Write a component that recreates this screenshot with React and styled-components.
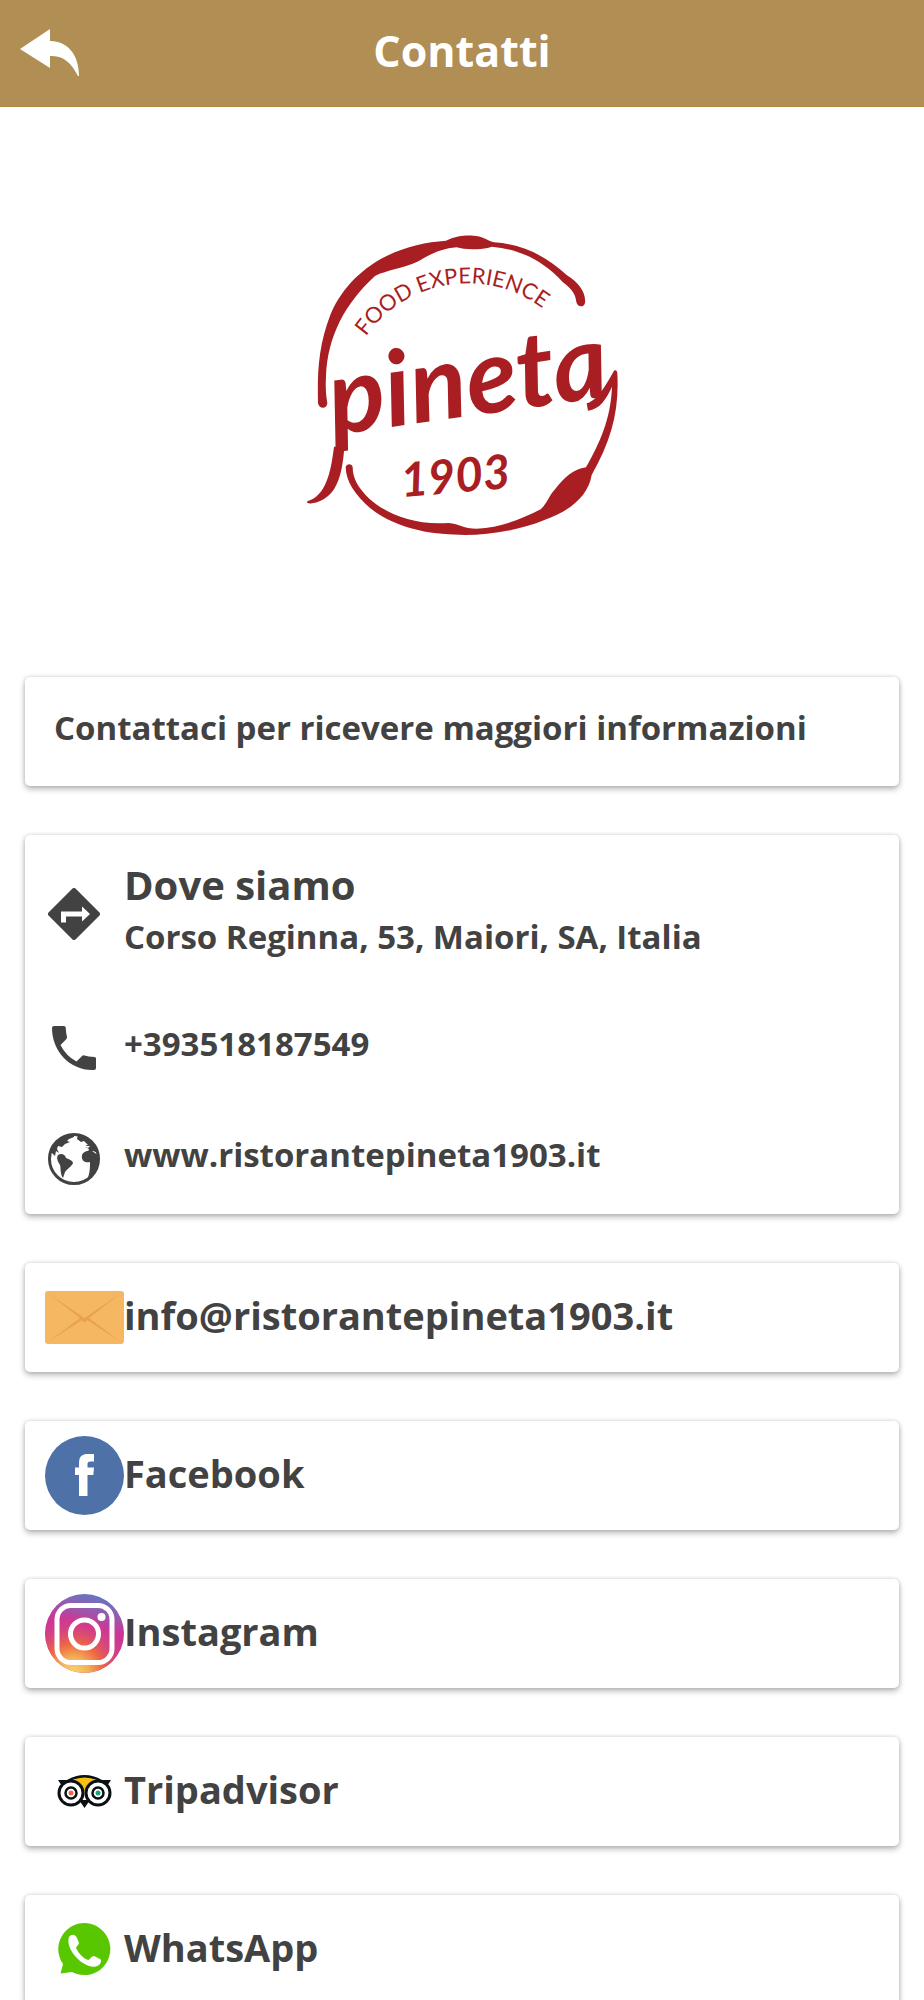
import React from 'react';
import styled, { createGlobalStyle } from 'styled-components';

const GlobalStyle = createGlobalStyle`
    * {
        box-sizing: border-box;
    }

    body {
        margin: 0;
        background: #FFFFFF;
        color: #424242;
        font-family: "Open Sans", "Noto Sans", sans-serif;
        font-weight: 700;
    }
`;

const Screen = styled.div`
    display: flex;
    flex-direction: column;
    height: 100vh;
`;

const Header = styled.header`
    display: grid;
    grid-template-columns: 100px 1fr 100px;
    align-items: center;
    flex-shrink: 0;
    height: 107px;
    background: #B08E54;
    border-bottom: 1px solid #B18A42;
`;

const BackButton = styled.button`
    display: flex;
    padding: 0 0 0 20px;
    border: 0;
    background: none;
    cursor: pointer;
`;

const Title = styled.h1`
    margin: 0;
    padding-bottom: 4px;
    color: white;
    font-size: 43px;
    line-height: 56px;
    text-align: center;
`;

const Content = styled.main`
    flex: 1;
    overflow-y: auto;
    scrollbar-width: none;
`;

const Hero = styled.div`
    display: flex;
    justify-content: center;
    padding: 113px 0 127px;
`;

const CardList = styled.div`
    display: flex;
    flex-direction: column;
    gap: 49px;
    padding: 0 25px 49px;
`;

const Card = styled.section`
    flex-shrink: 0;
    border-radius: 5px;
    background: white;
    box-shadow: 0 3px 6px rgba(0, 0, 0, 0.28), 0 0 4px rgba(0, 0, 0, 0.14);
`;

const Message = styled.p`
    margin: 0;
    padding: 31px 29px 38px;
    font-size: 33px;
    line-height: 40px;
`;

const InfoRow = styled.a`
    display: flex;
    align-items: center;
    gap: 24px;
    min-height: ${props => props.$tall ? '157px' : '111px'};
    padding: 0 23px;
    color: inherit;
    text-decoration: none;

    svg {
        flex-shrink: 0;
    }
`;

const InfoText = styled.div`
    display: flex;
    flex-direction: column;
    gap: 10px;
    padding-bottom: 8px;
`;

const InfoTitle = styled.h2`
    margin: 0;
    font-size: 40px;
    line-height: 44px;
`;

const InfoValue = styled.span`
    font-size: 33px;
    line-height: 40px;
`;

const SocialLink = styled.a`
    display: flex;
    align-items: center;
    height: 109px;
    padding: 0 20px;
    color: inherit;
    text-decoration: none;

    svg {
        flex-shrink: 0;
    }
`;

const SocialName = styled.span`
    padding-bottom: 6px;
    font-size: 38px;
    line-height: 44px;
`;

const LogoText = styled.text`
    font-family: Lato, sans-serif;
    font-style: ${props => props.$upright ? 'normal' : 'italic'};
    font-weight: ${props => props.$upright ? 400 : 700};
    font-size: ${props => props.$size}px;
    fill: #A91E22;
`;

function BackIcon() {
    return (
        <svg width="60" height="48" viewBox="0 0 60 48" fill="white" aria-hidden="true">
            <path d="M0 20 L30 0 V12 C48 12 59 26 59 47 H58 C50 32 43 27 30 27 V39 Z" />
        </svg>
    );
}

function PinetaLogo() {
    return (
        <svg width="344" height="330" viewBox="0 0 1032 990" fill="#A91E22" role="img" aria-label="Pineta 1903">
            <path d="M84 550 C82 460 84 380 122 282 C160 195 225 140 290 108 C350 78 410 66 468 62 C500 48 520 46 550 47 C575 47 590 60 612 67 C700 72 770 110 830 165 C870 190 888 220 885 248 C882 264 862 262 859 246 C857 220 842 204 818 186 C760 122 690 88 606 80 C575 90 525 90 500 82 C455 86 425 100 385 124 C340 146 290 150 255 168 C165 250 112 350 108 470 C106 505 108 525 112 550 C110 568 88 568 84 550 Z" />
            <path d="M167 742 C169 730 187 730 188 742 C188 775 205 805 238 836 C290 882 370 916 475 909 C510 912 520 926 560 926 C635 922 700 895 752 868 C772 850 775 830 795 808 C825 770 850 748 888 742 C928 670 962 600 966 500 C950 535 930 568 894 572 L890 550 C925 540 950 490 972 452 C977 448 982 453 982 460 C988 570 965 660 905 765 C895 830 835 875 765 899 C690 930 600 945 525 945 C440 943 330 935 240 864 C195 825 168 785 167 742 Z" />
            <path d="M163 680 C157 770 138 838 66 850 C56 852 48 849 52 844 C108 826 122 760 132 680 Z" />
            <path id="tagline" d="M161 562 A372 372 0 0 1 905 562" fill="none" />
            <LogoText $upright $size={66}>
                <textPath href="#tagline" startOffset="45%" textAnchor="middle">FOOD EXPERIENCE</textPath>
            </LogoText>
            <LogoText $size={314} transform="translate(130 645) rotate(-8)">pineta</LogoText>
            <LogoText $size={142} transform="translate(336 832) rotate(-5)">1903</LogoText>
        </svg>
    );
}

function DirectionsIcon() {
    return (
        <svg width="52" height="52" viewBox="0 0 52 52" fill="#424242" aria-hidden="true">
            <path d="M24.500 .5 Q26 -.6 27.500 .5 L51.500 24.500 Q52.500 26 51.500 27.500 L27.500 51.500 Q26 52.600 24.500 51.500 L.5 27.500 Q-.6 26 .5 24.500 Z" />
            <path d="M13 34.500 V23.500 H34 V18.500 L42 26 L34 33.500 V28.500 H18 V34.500 Z" fill="white" />
        </svg>
    );
}

function PhoneIcon() {
    return (
        <svg width="52" height="52" viewBox="0 0 52 52" fill="#424242" aria-hidden="true">
            <path d="M6 4 H16 Q17.500 4 17.700 5.500 Q18 11 19 15 Q19 16.500 18 17.500 L12.500 23 Q18 34 28.500 39.500 L34 34 Q35 33 36.500 33.500 Q40 34.500 46.500 35 Q48 35 48 36.500 V46 Q48 48 46 48 C22 49 4 29 4 6 Q4 4 6 4 Z" />
        </svg>
    );
}

function GlobeIcon() {
    return (
        <svg width="52" height="52" viewBox="0 0 52 52" fill="#424242" aria-hidden="true">
            <circle cx="26" cy="26" r="24.500" fill="white" stroke="#424242" strokeWidth="3" />
            <path d="M10 22 C13 20 17 21 18 25 C21 26 25 28 25 30 C24 33 19 36 17 39 L15 45 C12 41 13 35 12 32 C10 29 8 25 10 22 Z" />
            <path d="M34 22 C35 19 39 17 44 18 L50 22 C52 33 46 43 39 47 C42 41 42 34 42 29 C37 30 33 28 34 22 Z" />
            <path d="M2 18 C6 8 16 1 26 1 L26 4 L21 6 L19 8 L22 9 L17 11 L14 14 L10 13 L9 16 L11 20 L8 18 L7 23 Z" />
            <path d="M30 1 C40 3 47 10 50 20 L45 18 L40 19 L41 16 L37 14 L37 12 L40 12 L36 8 L33 9 L29 6 Z" />
            <path d="M36 11 L39 13 L42 13 L40 15 L37 14 Z" fill="white" />
        </svg>
    );
}

function MailIcon() {
    return (
        <svg width="79" height="79" viewBox="0 0 79 79" aria-hidden="true">
            <rect y="13" width="79" height="53" rx="3" fill="#F6B763" />
            <path d="M3 15 L35 37 L39.500 40 L44 37 L76 15 L44 40 L76 64 L42 42 L39.500 45 L37 42 L3 64 L35 40 Z" fill="#E9A24F" />
        </svg>
    );
}

function FacebookIcon() {
    return (
        <svg width="79" height="79" viewBox="0 0 79 79" aria-hidden="true">
            <circle cx="39.500" cy="39.500" r="39.500" fill="#4E71A8" />
            <path d="M34 60 V39 H30 V31.500 H34 V27 C34 20.500 37 18 43 18 H49 V25.500 H45.500 C43 25.500 42.500 26.500 42.500 28.500 V31.500 H49 L48.300 39 H42.500 V60 Z" fill="white" />
        </svg>
    );
}

function InstagramIcon() {
    return (
        <svg width="79" height="79" viewBox="0 0 79 79" aria-hidden="true">
            <defs>
                <linearGradient id="ig-base" x1=".65" y1="0" x2=".4" y2="1">
                    <stop offset="0" stopColor="#5F78C4" />
                    <stop offset=".16" stopColor="#8A62B4" />
                    <stop offset=".4" stopColor="#CB3697" />
                    <stop offset="1" stopColor="#CB3697" />
                </linearGradient>
                <radialGradient id="ig-warm" cx=".36" cy="1" r=".78">
                    <stop offset="0" stopColor="#F9D56C" />
                    <stop offset=".25" stopColor="#F3B058" />
                    <stop offset=".48" stopColor="#EE6544" />
                    <stop offset="1" stopColor="#CB3697" stopOpacity="0" />
                </radialGradient>
            </defs>
            <circle cx="39.500" cy="39.500" r="39.500" fill="url(#ig-base)" />
            <circle cx="39.500" cy="39.500" r="39.500" fill="url(#ig-warm)" />
            <rect x="12" y="11.500" width="55" height="57" rx="14" fill="none" stroke="white" strokeWidth="5" />
            <circle cx="39.500" cy="40" r="14" fill="none" stroke="white" strokeWidth="5" />
            <circle cx="56.500" cy="23" r="4" fill="white" />
        </svg>
    );
}

function TripadvisorIcon() {
    return (
        <svg width="79" height="79" viewBox="0 0 79 79" aria-hidden="true">
            <path d="M13 28 H22 Q39.500 18 57 28 H66 L62 34 H17 Z" fill="#0B1015" />
            <path d="M27 28 Q39.500 23 52 28 Q42 31 39.500 40 Q37 31 27 28 Z" fill="#F7C015" />
            <path d="M34 48 H45 L39.500 56 Z" fill="#0B1015" />
            {[{ x: 26, fill: '#EC6844' }, { x: 53, fill: '#18A67E' }].map(eye => (
                <g key={eye.x}>
                    <circle cx={eye.x} cy="41" r="12" fill="white" stroke="#0B1015" strokeWidth="3" />
                    <circle cx={eye.x} cy="41" r="5.500" fill="white" stroke="#0B1015" strokeWidth="2.500" />
                    <circle cx={eye.x} cy="41" r="2.500" fill={eye.fill} />
                </g>
            ))}
        </svg>
    );
}

function WhatsAppIcon() {
    return (
        <svg width="79" height="79" viewBox="0 0 79 79" aria-hidden="true">
            <path d="M15.500 63.500 L18 54 A26 26 0 1 1 27 62 Z" fill="#59C700" />
            <path d="M24 27 C27 23 31 25 32 28 L34 33 C34 35 31 36 31 38 C34 44 38 48 43 50 C45 50 46 46 49 46 L55 49 C57 50 56 53 54 55 C50 58 44 57 38 53 C30 48 21 36 24 27 Z" fill="white" />
        </svg>
    );
}

const socials = [
    { name: 'info@ristorantepineta1903.it', href: 'mailto:info@ristorantepineta1903.it', Icon: MailIcon },
    { name: 'Facebook', href: '#facebook', Icon: FacebookIcon },
    { name: 'Instagram', href: '#instagram', Icon: InstagramIcon },
    { name: 'Tripadvisor', href: '#tripadvisor', Icon: TripadvisorIcon },
    { name: 'WhatsApp', href: '#whatsapp', Icon: WhatsAppIcon },
];

export default function App() {
    return (
        <>
        <GlobalStyle />
        <Screen>
            <Header>
                <BackButton type="button" aria-label="Indietro"><BackIcon /></BackButton>
                <Title>Contatti</Title>
            </Header>
            <Content>
                <Hero><PinetaLogo /></Hero>
                <CardList>
                    <Card>
                        <Message>Contattaci per ricevere maggiori informazioni</Message>
                    </Card>
                    <Card>
                        <InfoRow $tall href="#mappa">
                            <DirectionsIcon />
                            <InfoText>
                                <InfoTitle>Dove siamo</InfoTitle>
                                <InfoValue>Corso Reginna, 53, Maiori, SA, Italia</InfoValue>
                            </InfoText>
                        </InfoRow>
                        <InfoRow href="tel:+393518187549">
                            <PhoneIcon />
                            <InfoText><InfoValue>+393518187549</InfoValue></InfoText>
                        </InfoRow>
                        <InfoRow href="#sito">
                            <GlobeIcon />
                            <InfoText><InfoValue>www.ristorantepineta1903.it</InfoValue></InfoText>
                        </InfoRow>
                    </Card>
                    {socials.map(({ name, href, Icon }) => (
                        <Card key={name}>
                            <SocialLink href={href}>
                                <Icon />
                                <SocialName>{name}</SocialName>
                            </SocialLink>
                        </Card>
                    ))}
                </CardList>
            </Content>
        </Screen>
        </>
    );
}
